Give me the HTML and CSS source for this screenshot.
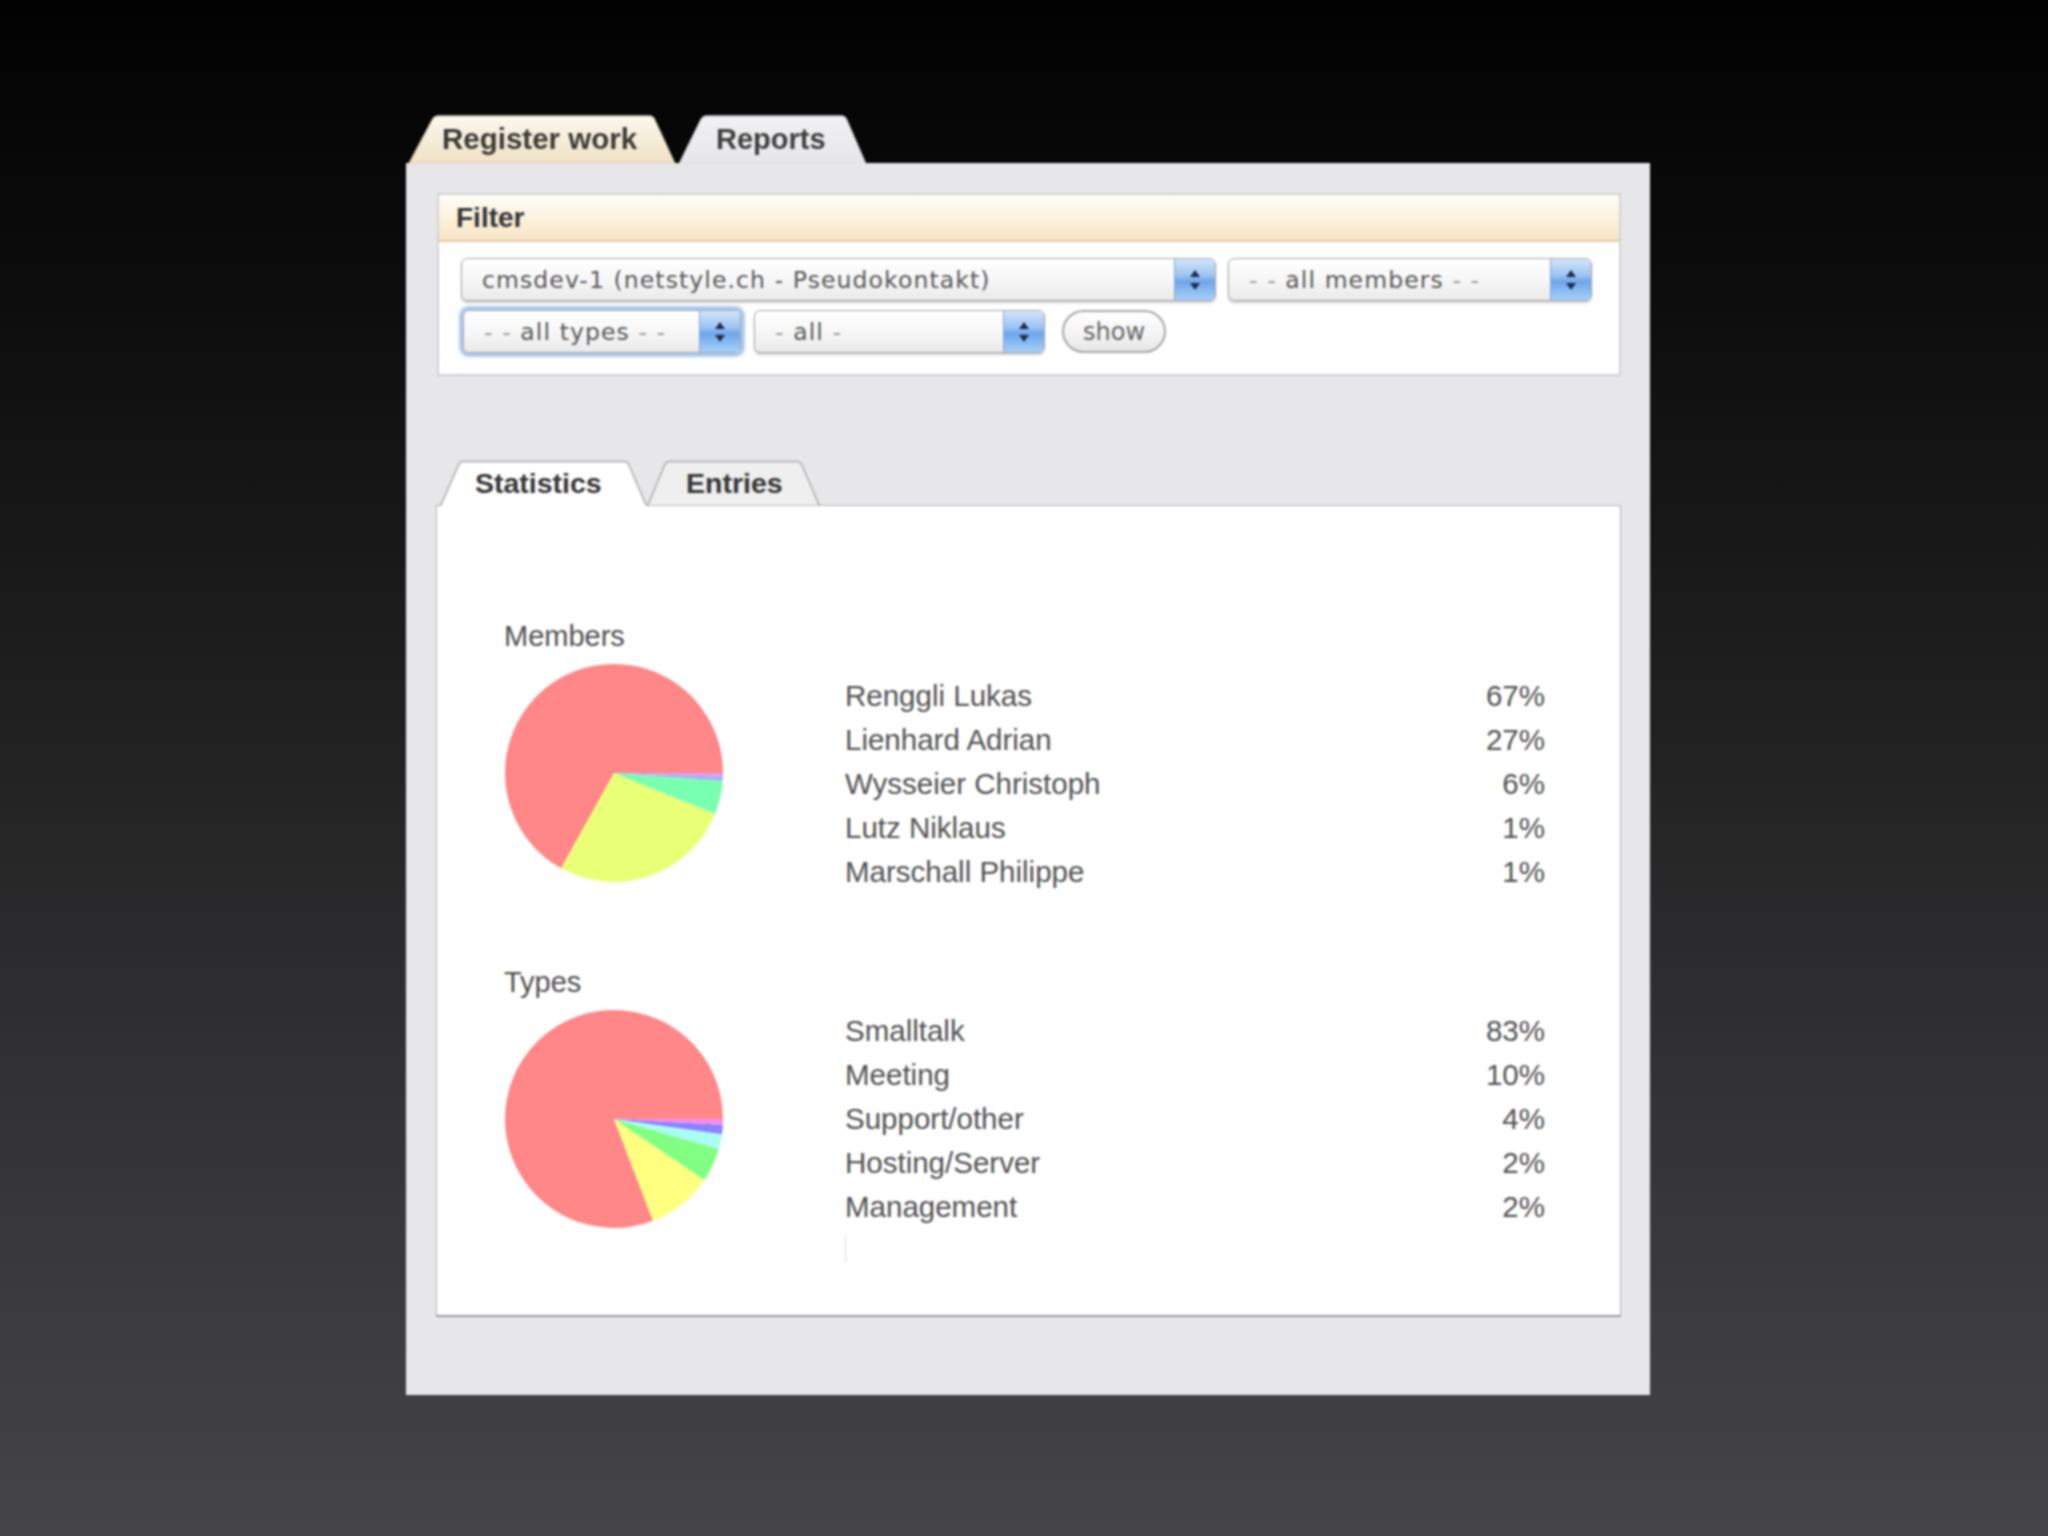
FILE: index.html
```html
<!DOCTYPE html>
<html>
<head>
<meta charset="utf-8">
<title>Reports</title>
<link rel="stylesheet" href="styles.css">
</head>
<body>
<div class="page">
  <div class="window">
    <div class="toptabs">
      <div class="ttab ttab-register">
        <svg class="tabshape" viewBox="0 0 266 48" preserveAspectRatio="none">
          <defs>
            <linearGradient id="gcream" x1="0" y1="0" x2="0" y2="1">
              <stop offset="0" stop-color="#fcf8ef"/>
              <stop offset="1" stop-color="#efe2c5"/>
            </linearGradient>
          </defs>
          <path d="M0.5,48 L23.5,4.5 Q25.5,1 29.5,1 L240,1 Q244,1 245.5,4.5 L265.5,48 Z" fill="url(#gcream)" stroke="#d9ceb6" stroke-width="1.5"/>
        </svg>
        <span>Register work</span>
      </div>
      <div class="ttab ttab-reports">
        <svg class="tabshape" viewBox="0 0 187 48" preserveAspectRatio="none">
          <defs>
            <linearGradient id="ggray" x1="0" y1="0" x2="0" y2="1">
              <stop offset="0" stop-color="#f1f0f2"/>
              <stop offset="1" stop-color="#e7e6e8"/>
            </linearGradient>
          </defs>
          <path d="M0.5,48.5 L22,4.5 Q24,1 28,1 L162,1 Q166,1 167.5,4.5 L186.5,48.5 Z" fill="url(#ggray)" stroke="#d0cfd1" stroke-width="1.5"/>
        </svg>
        <span>Reports</span>
      </div>
    </div>

    <div class="panel">
      <div class="filter">
        <div class="filter-head">Filter</div>
        <div class="filter-body">
          <div class="frow">
            <div class="select sel-project">
              <div class="val">cmsdev-1 (netstyle.ch - Pseudokontakt)</div>
              <div class="arr"><svg viewBox="0 0 14 24" width="14" height="24"><path d="M7,2 L12,9 L2,9 Z M2,15 L12,15 L7,22 Z" fill="#1d2b4f"/></svg></div>
            </div>
            <div class="select sel-members">
              <div class="val"><span class="dash">- -</span>&nbsp;all members&nbsp;<span class="dash">- -</span></div>
              <div class="arr"><svg viewBox="0 0 14 24" width="14" height="24"><path d="M7,2 L12,9 L2,9 Z M2,15 L12,15 L7,22 Z" fill="#1d2b4f"/></svg></div>
            </div>
          </div>
          <div class="frow">
            <div class="select sel-types focus">
              <div class="val"><span class="dash">- -</span>&nbsp;all types&nbsp;<span class="dash">- -</span></div>
              <div class="arr"><svg viewBox="0 0 14 24" width="14" height="24"><path d="M7,2 L12,9 L2,9 Z M2,15 L12,15 L7,22 Z" fill="#1d2b4f"/></svg></div>
            </div>
            <div class="select sel-all">
              <div class="val"><span class="dash">-</span>&nbsp;all&nbsp;<span class="dash">-</span></div>
              <div class="arr"><svg viewBox="0 0 14 24" width="14" height="24"><path d="M7,2 L12,9 L2,9 Z M2,15 L12,15 L7,22 Z" fill="#1d2b4f"/></svg></div>
            </div>
            <div class="btn">show</div>
          </div>
        </div>
      </div>

      <div class="itabs">
        <div class="itab itab-stats">
          <svg class="tabshape" viewBox="0 0 207 46" preserveAspectRatio="none">
            <path d="M0.5,46 L19,4 Q20.5,1.5 23.5,1.5 L184,1.5 Q187,1.5 188.5,4 L206.5,46 Z" fill="#ffffff" stroke="none"/>
            <path d="M0.5,46 L19,4 Q20.5,1.5 23.5,1.5 L184,1.5 Q187,1.5 188.5,4 L206.5,46" fill="none" stroke="#adadad" stroke-width="1.5"/>
          </svg>
          <span>Statistics</span>
        </div>
        <div class="itab itab-entries">
          <svg class="tabshape" viewBox="0 0 173 46" preserveAspectRatio="none">
            <path d="M0.5,46 L18,4 Q19.5,1.5 22.5,1.5 L150,1.5 Q153,1.5 154.5,4 L172.5,46 Z" fill="#efefef" stroke="#adadad" stroke-width="1.5"/>
          </svg>
          <span>Entries</span>
        </div>
      </div>

      <div class="content">
        <div class="stat stat-members">
          <div class="stat-title">Members</div>
          <svg class="pie" viewBox="0 0 220 220" width="220" height="220">
            <path d="M110,110 L219,110 A109,109 0 1 0 57.15,205.33 Z" fill="#ff8787"/>
            <path d="M110,110 L57.15,205.33 A109,109 0 0 0 211.06,150.83 Z" fill="#e9ff76"/>
            <path d="M110,110 L211.06,150.83 A109,109 0 0 0 218.73,117.60 Z" fill="#78ffb0"/>
            <path d="M110,110 L218.73,117.60 A109,109 0 0 0 218.93,113.80 Z" fill="#a9a6ff"/>
            <path d="M110,110 L218.93,113.80 A109,109 0 0 0 219,110 Z" fill="#d8a0ea"/>
          </svg>
          <div class="legend">
            <div class="lrow"><span>Renggli Lukas</span><span>67%</span></div>
            <div class="lrow"><span>Lienhard Adrian</span><span>27%</span></div>
            <div class="lrow"><span>Wysseier Christoph</span><span>6%</span></div>
            <div class="lrow"><span>Lutz Niklaus</span><span>1%</span></div>
            <div class="lrow"><span>Marschall Philippe</span><span>1%</span></div>
          </div>
        </div>

        <div class="stat stat-types">
          <div class="stat-title">Types</div>
          <svg class="pie" viewBox="0 0 220 220" width="220" height="220">
            <path d="M110,110 L219,110 A109,109 0 1 0 149.06,211.76 Z" fill="#ff8787"/>
            <path d="M110,110 L149.06,211.76 A109,109 0 0 0 200.37,170.95 Z" fill="#ffff80"/>
            <path d="M110,110 L200.37,170.95 A109,109 0 0 0 214.78,140.05 Z" fill="#82ff82"/>
            <path d="M110,110 L214.78,140.05 A109,109 0 0 0 217.94,125.17 Z" fill="#a8fff2"/>
            <path d="M110,110 L217.94,125.17 A109,109 0 0 0 218.85,115.70 Z" fill="#8a82ff"/>
            <path d="M110,110 L218.85,115.70 A109,109 0 0 0 219,110 Z" fill="#f58af0"/>
          </svg>
          <div class="legend">
            <div class="lrow"><span>Smalltalk</span><span>83%</span></div>
            <div class="lrow"><span>Meeting</span><span>10%</span></div>
            <div class="lrow"><span>Support/other</span><span>4%</span></div>
            <div class="lrow"><span>Hosting/Server</span><span>2%</span></div>
            <div class="lrow"><span>Management</span><span>2%</span></div>
            <div class="cut"></div>
          </div>
        </div>
      </div>
    </div>
  </div>
</div>
</body>
</html>
```

FILE: styles.css
```css
html, body {
  margin: 0;
  padding: 0;
}

body {
  width: 2048px;
  height: 1536px;
  overflow: hidden;
  background: linear-gradient(180deg, #020202 0%, #0c0c0c 18%, #1f1f20 45%, #333335 72%, #454447 100%);
  font-family: "Liberation Sans", Arial, sans-serif;
}

.page {
  padding: 115px 0 0 406px;
}

.window {
  width: 1244px;
  filter: blur(1.1px);
}

/* top tabs */
.toptabs {
  display: flex;
  gap: 4px;
  padding-left: 3px;
  height: 48px;
}

.ttab, .itab {
  position: relative;
  display: flex;
  align-items: center;
}

.tabshape {
  position: absolute;
  left: 0;
  top: 0;
  width: 100%;
  height: 100%;
}

.ttab span, .itab span {
  position: relative;
  font-weight: bold;
  font-size: 28.5px;
  color: #363636;
  white-space: nowrap;
}

.ttab-register {
  width: 266px;
}

.ttab-register span {
  padding-left: 33px;
  color: #3b3a36;
  font-size: 29.5px;
}

.ttab-reports {
  width: 187px;
}

.ttab-reports span {
  padding-left: 37px;
  color: #404040;
  font-size: 29px;
}

/* main panel */
.panel {
  box-sizing: border-box;
  height: 1232px;
  background: #e7e6e8;
  padding: 30px 29px 0 30px;
}

.filter {
  box-sizing: border-box;
  height: 183px;
  margin-left: 1px;
  background: #ffffff;
  border: 2px solid #d3d3d5;
}

.filter-head {
  box-sizing: border-box;
  height: 47px;
  display: flex;
  align-items: center;
  padding-left: 17px;
  background: linear-gradient(180deg, #fffdf9 0%, #fcf1dc 55%, #f7e4c3 100%);
  border-bottom: 2px solid #dfcba6;
  font-weight: bold;
  font-size: 28px;
  color: #343434;
}

.filter-body {
  display: flex;
  flex-direction: column;
  gap: 9px;
  padding: 16px 0 0 22px;
}

.frow {
  display: flex;
  align-items: center;
}

.select {
  box-sizing: border-box;
  height: 43px;
  display: flex;
  border: 1px solid #a9a9a9;
  border-radius: 6px;
  background: linear-gradient(180deg, #ffffff 0%, #f6f6f6 55%, #eaeaea 100%);
  box-shadow: 0 2px 2px rgba(0, 0, 0, 0.2);
  overflow: hidden;
}

.select .val {
  flex: 1;
  display: flex;
  align-items: center;
  padding-left: 20px;
  font-family: "DejaVu Sans", "Liberation Sans", sans-serif;
  font-size: 23.5px;
  letter-spacing: 1.1px;
  color: #585858;
  white-space: nowrap;
  overflow: hidden;
}

.select .dash {
  color: #9a9a9a;
}

.select .arr {
  width: 40px;
  display: flex;
  align-items: center;
  justify-content: center;
  border-left: 1px solid #7fa7d8;
  background: linear-gradient(180deg, #d3e5fa 0%, #9cc4f2 40%, #6fa6ea 55%, #a4cff8 100%);
}

.sel-project {
  width: 755px;
}

.sel-members {
  width: 364px;
  margin-left: 12px;
}

.sel-types {
  width: 278px;
  margin-left: 2px;
}

.sel-all {
  width: 291px;
  margin-left: 13px;
}

.focus {
  box-shadow: 0 0 0 3px #a8c7ee, 0 0 0 5px rgba(170, 200, 240, 0.45);
}

.btn {
  box-sizing: border-box;
  width: 104px;
  height: 43px;
  margin-left: 17px;
  display: flex;
  align-items: center;
  justify-content: center;
  border: 2px solid #a8a8a8;
  border-radius: 22px;
  background: linear-gradient(180deg, #ffffff 0%, #f3f3f3 60%, #e6e6e6 100%);
  font-family: "DejaVu Sans", "Liberation Sans", sans-serif;
  font-size: 24px;
  color: #666666;
}

/* inner tabs */
.itabs {
  position: relative;
  z-index: 1;
  display: flex;
  height: 46px;
  margin: 84px 0 -1px 4px;
}

.itab-stats {
  width: 207px;
}

.itab-stats span {
  padding-left: 35px;
}

.itab-entries {
  width: 173px;
}

.itab-entries span {
  padding-left: 39px;
}

.content {
  box-sizing: border-box;
  height: 812px;
  background: #ffffff;
  border: 1px solid #b3b3b3;
  border-bottom: 2px solid #9a9a9a;
  padding: 113px 0 0 67px;
}

.stat {
  display: grid;
  grid-template-columns: 341px 700px;
  align-items: start;
}

.stat-types {
  margin-top: 71px;
}

.stat-title {
  grid-column: 1 / 3;
  font-size: 29px;
  line-height: 34px;
  color: #505050;
  margin-bottom: 10px;
}

.pie {
  display: block;
}

.legend {
  display: flex;
  flex-direction: column;
}

.stat-members .legend {
  margin-top: 11px;
}

.lrow {
  display: flex;
  justify-content: space-between;
  height: 44px;
  line-height: 44px;
  font-size: 29.5px;
  color: #525252;
}

.cut {
  width: 0;
  height: 28px;
  margin-top: 6px;
  border-left: 1px solid #dcdcdc;
}
```
